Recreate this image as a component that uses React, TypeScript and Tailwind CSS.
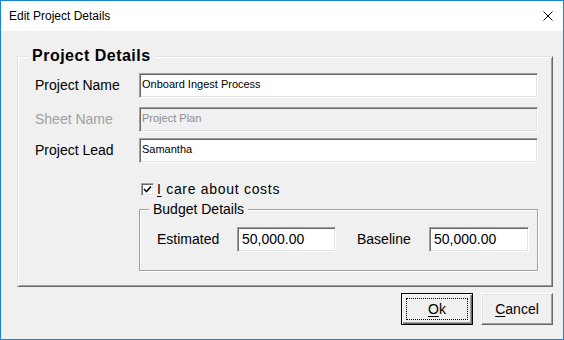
const sunken =
  'border border-t-[#a0a0a0] border-l-[#a0a0a0] border-r-white border-b-white shadow-[inset_1px_1px_0_#696969,inset_-1px_-1px_0_#e3e3e3]'

interface FieldProps {
  label: string
  value: string
  disabled?: boolean
  className?: string
}

const FieldRow = ({ label, value, disabled, className }: FieldProps) => (
  <div className={`flex items-center h-[25px] ${className ?? ''}`}>
    <div
      className={`w-[104px] text-[14px] ${disabled ? 'text-[#a0a0a0]' : 'text-black'}`}
    >
      {label}
    </div>
    <div
      className={`w-[399px] h-[25px] flex items-center pl-[2px] pb-[3px] text-[11px] ${sunken} ${
        disabled ? 'bg-[#f0f0f0] text-[#8d8d8d]' : 'bg-white text-black'
      }`}
    >
      {value}
    </div>
  </div>
)

const AmountBox = ({ value, width }: { value: string; width: string }) => (
  <div
    className={`${width} h-[25px] flex items-center pl-[4px] bg-white text-[14px] ${sunken}`}
  >
    {value}
  </div>
)

const App = () => {
  return (
    <div className="w-[564px] h-[340px] border border-[#1883d7] bg-[#f0f0f0] flex flex-col font-['Liberation_Sans',Arial,sans-serif] text-black overflow-hidden">
      {/* title bar */}
      <div className="h-[30px] bg-white flex items-center justify-between pl-[8px] pr-[10px] shrink-0">
        <span className="text-[12px]">Edit Project Details</span>
        <svg width="10" height="10" viewBox="0 0 10 10">
          <path d="M0.5 0.5 L9.5 9.5 M9.5 0.5 L0.5 9.5" stroke="#000" strokeWidth="1" />
        </svg>
      </div>

      {/* main frame */}
      <fieldset className="ml-[16px] mt-[15px] w-[536px] border border-t-[#e3e3e3] border-l-[#e3e3e3] border-r-[#696969] border-b-[#696969] shadow-[inset_1px_1px_0_#fff,inset_-1px_-1px_0_#a0a0a0]">
        <legend className="ml-[10px] px-[4px] bg-[#f0f0f0] text-[16px] leading-[20px] font-bold tracking-[0.5px]">
          Project Details
        </legend>
        <div className="pl-[17px] pt-[7px] pb-[15px]">
          <FieldRow label="Project Name" value="Onboard Ingest Process" />
          <FieldRow label="Sheet Name" value="Project Plan" disabled className="mt-[9px]" />
          <FieldRow label="Project Lead" value="Samantha" className="mt-[6px]" />

          <div className="mt-[18px] ml-[106px] h-[16px] flex items-center gap-[3px]">
            <div className={`w-[13px] h-[13px] bg-white flex items-center justify-center ${sunken}`}>
              <svg width="9" height="9" viewBox="0 0 9 9">
                <path d="M1 4 L3.5 6.5 L8 1.5" fill="none" stroke="#000" strokeWidth="1.6" />
              </svg>
            </div>
            <span className="text-[14px] tracking-[0.7px]">
              <span className="underline underline-offset-2">I</span> care about costs
            </span>
          </div>

          <fieldset className="ml-[104px] mt-[2px] w-[399px] border border-[#a0a0a0] shadow-[inset_1px_1px_0_#fff,1px_1px_0_#fff]">
            <legend className="ml-[9px] px-[4px] bg-[#f0f0f0] text-[14px] leading-[20px]">
              Budget Details
            </legend>
            <div className="flex items-center pl-[17px] pt-[8px] pb-[18px] text-[14px]">
              <span className="w-[80px]">Estimated</span>
              <AmountBox value="50,000.00" width="w-[99px]" />
              <span className="ml-[21px] w-[72px]">Baseline</span>
              <AmountBox value="50,000.00" width="w-[100px]" />
            </div>
          </fieldset>
        </div>
      </fieldset>

      {/* buttons */}
      <div className="flex justify-end gap-[8px] pr-[10px] mt-[6px]">
        <button className="relative w-[72px] h-[32px] border border-black bg-[#f0f0f0] text-[14px] shadow-[inset_1px_1px_0_#fff,inset_-1px_-1px_0_#696969,inset_-2px_-2px_0_#a0a0a0]">
          <span className="absolute inset-[4px] border border-dotted border-black" />
          <span className="underline underline-offset-2">O</span>k
        </button>
        <button className="w-[72px] h-[32px] border border-t-white border-l-white border-r-[#696969] border-b-[#696969] bg-[#f0f0f0] text-[14px] shadow-[inset_-1px_-1px_0_#a0a0a0,inset_1px_1px_0_#e3e3e3]">
          <span className="underline underline-offset-2">C</span>ancel
        </button>
      </div>
    </div>
  )
}

export default App
